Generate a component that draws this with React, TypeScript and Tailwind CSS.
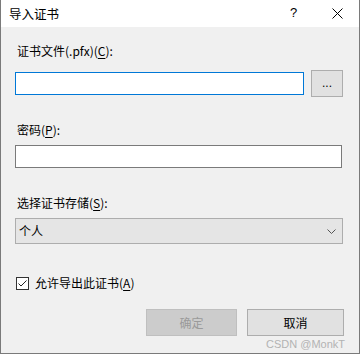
const font = { fontFamily: '"Noto Sans CJK SC", "Noto Sans", sans-serif' };

function Underlined({ label, keyChar, tail = ":" }: { label: string; keyChar: string; tail?: string }) {
  return (
    <span>
      {label}(<span className="underline underline-offset-2">{keyChar}</span>){tail}
    </span>
  );
}

export default function App() {
  return (
    <div className="w-[361px] h-[356px] bg-white" style={font}>
      <div className="w-[360px] h-[354px] border border-t-0 border-[#7a7a7a] flex flex-col text-[12px] leading-[16px] text-black">
        {/* title bar */}
        <div className="h-[27px] bg-white flex items-center pl-[8px] relative">
          <span className="text-[12.5px]">导入证书</span>
          <span className="absolute left-[289px] top-[5px] text-[13px] font-['Liberation_Sans',sans-serif]">?</span>
          <svg className="absolute left-[331px] top-[8px]" width="11" height="11" viewBox="0 0 11 11">
            <path d="M0.5 0.5 L10.5 10.5 M10.5 0.5 L0.5 10.5" stroke="#000" strokeWidth="1" fill="none" />
          </svg>
        </div>

        {/* body */}
        <div className="flex-1 bg-[#f0f0f0] flex flex-col pl-[14px] pt-[16px]">
          <div className="h-[16px] pl-[2px]">
            <Underlined label="证书文件(.pfx)" keyChar="C" />
          </div>
          <div className="mt-[11px] h-[27px] flex items-center gap-[7px]">
            <div className="w-[289px] h-[23px] bg-white border border-[#0078d7]" />
            <div className="w-[32px] h-[27px] bg-[#e1e1e1] border border-[#adadad] flex items-center justify-center pb-[2px] text-[12px] font-['Liberation_Sans',sans-serif]">
              ...
            </div>
          </div>

          <div className="mt-[25px] h-[16px] pl-[2px]">
            <Underlined label="密码" keyChar="P" />
          </div>
          <div className="mt-[7px] w-[327px] h-[23px] bg-white border border-[#7a7a7a]" />

          <div className="mt-[27px] h-[16px] pl-[2px]">
            <Underlined label="选择证书存储" keyChar="S" />
          </div>
          <div className="mt-[7px] w-[328px] h-[26px] bg-[#e5e5e5] border border-[#adadad] flex items-center justify-between pl-[3px] pr-[6px]">
            <span>个人</span>
            <svg width="9" height="5" viewBox="0 0 9 5">
              <path d="M0.5 0.5 L4.5 4.5 L8.5 0.5" stroke="#555" strokeWidth="1" fill="none" />
            </svg>
          </div>

          <div className="mt-[31px] h-[16px] flex items-center gap-[6px] pl-[1px]">
            <div className="w-[13px] h-[13px] border border-[#333] bg-white flex items-center justify-center">
              <svg width="11" height="11" viewBox="0 0 11 11">
                <path d="M1.5 5.5 L4 8 L9.5 2.5" stroke="#222" strokeWidth="1" fill="none" />
              </svg>
            </div>
            <Underlined label="允许导出此证书" keyChar="A" tail="" />
          </div>

          <div className="mt-[18px] h-[27px] flex justify-end gap-[10px] pr-[15px]">
            <div className="w-[91px] h-[27px] bg-[#cccccc] border border-[#bfbfbf] text-[#9a9a9a] flex items-center justify-center">
              确定
            </div>
            <div className="w-[97px] h-[27px] bg-[#e1e1e1] border border-[#adadad] flex items-center justify-center">
              取消
            </div>
          </div>
          <div className="h-[16px] flex justify-end pr-[14px] text-[11px] text-[#b3b3b3] font-['Liberation_Sans',sans-serif]">
            CSDN @MonkT
          </div>
        </div>
      </div>
    </div>
  );
}
